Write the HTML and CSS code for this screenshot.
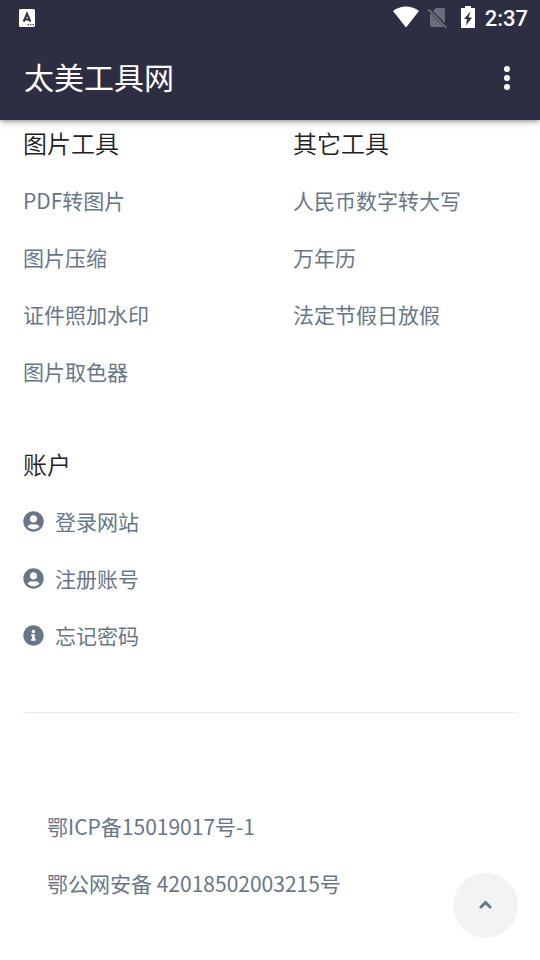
FILE: index.html
```html
<!DOCTYPE html>
<html lang="zh-CN">
<head>
<meta charset="utf-8">
<meta name="viewport" content="width=device-width, initial-scale=1">
<title>太美工具网</title>
<link rel="stylesheet" href="styles.css">
</head>
<body>
<header class="top">
  <div class="status">
    <svg class="ime" width="16" height="18" viewBox="0 0 16 18" aria-hidden="true">
      <rect width="16" height="18" rx="1.5" fill="#fff"/>
      <path d="M4.6 12.6 8 4.800l3.400 7.800M5.800 10.400h4.400" fill="none" stroke="#2d2e43" stroke-width="2"/>
      <path d="M8.500 15.700h1.300M11 15.700h1.300M13.500 15.700h1.300" stroke="#2d2e43" stroke-width="1.300"/>
    </svg>
    <div class="signals">
      <svg width="26" height="22" viewBox="0 0 26 22" aria-hidden="true">
        <path d="M0 5C7.500-1 18.500-1 26 5L13 21.500z" fill="#fff"/>
      </svg>
      <svg width="20" height="22" viewBox="0 0 20 22" aria-hidden="true">
        <path d="M8 2H15.500Q17 2 17 3.500V17L5 5zM2 7 16 21H4Q2 21 2 19z" fill="#6c6d7b"/>
        <path d="M.5 3.500 18.500 21.800" stroke="#6c6d7b" stroke-width="1.800"/>
      </svg>
      <svg class="battery" width="14" height="22" viewBox="0 0 14 22" aria-hidden="true">
        <path d="M4 0h6v2h4v20H0V2h4z" fill="#fff"/>
        <path d="M9.500 5.500 3 13H6L5 19.500 11 11.500H7.500z" fill="#2d2e43"/>
      </svg>
      <span class="clock">2:37</span>
    </div>
  </div>
  <div class="appbar">
    <h1 class="title">太美工具网</h1>
    <button class="more" type="button" aria-label="更多">
      <svg width="6" height="24" viewBox="0 0 6 24" aria-hidden="true">
        <circle cx="3" cy="3" r="3"/><circle cx="3" cy="12" r="3"/><circle cx="3" cy="21" r="3"/>
      </svg>
    </button>
  </div>
</header>
<main class="content">
  <div class="groups">
    <section class="group">
      <h2 class="heading">图片工具</h2>
      <ul class="links">
        <li><a href="#">PDF转图片</a></li>
        <li><a href="#">图片压缩</a></li>
        <li><a href="#">证件照加水印</a></li>
        <li><a href="#">图片取色器</a></li>
      </ul>
    </section>
    <section class="group">
      <h2 class="heading">其它工具</h2>
      <ul class="links">
        <li><a href="#">人民币数字转大写</a></li>
        <li><a href="#">万年历</a></li>
        <li><a href="#">法定节假日放假</a></li>
      </ul>
    </section>
    <section class="group">
      <h2 class="heading">账户</h2>
      <ul class="links">
        <li><a href="#"><svg class="icon" viewBox="0 0 496 512" aria-hidden="true"><path d="M248 8C111 8 0 119 0 256s111 248 248 248 248-111 248-248S385 8 248 8zm0 96c48.600 0 88 39.400 88 88s-39.400 88-88 88-88-39.400-88-88 39.400-88 88-88zm0 344c-58.700 0-111.300-26.600-146.500-68.200 18.800-35.400 55.600-59.800 98.500-59.800 2.400 0 4.800.4 7.100 1.100 13 4.200 26.600 6.900 40.900 6.900 14.300 0 28-2.700 40.900-6.900 2.300-.7 4.700-1.100 7.100-1.100 42.900 0 79.700 24.400 98.500 59.800C359.300 421.400 306.700 448 248 448z"/></svg>登录网站</a></li>
        <li><a href="#"><svg class="icon" viewBox="0 0 496 512" aria-hidden="true"><path d="M248 8C111 8 0 119 0 256s111 248 248 248 248-111 248-248S385 8 248 8zm0 96c48.600 0 88 39.400 88 88s-39.400 88-88 88-88-39.400-88-88 39.400-88 88-88zm0 344c-58.700 0-111.300-26.600-146.500-68.200 18.800-35.400 55.600-59.800 98.500-59.800 2.400 0 4.800.4 7.100 1.100 13 4.200 26.600 6.900 40.900 6.900 14.300 0 28-2.700 40.900-6.900 2.300-.7 4.700-1.100 7.100-1.100 42.900 0 79.700 24.400 98.500 59.800C359.300 421.400 306.700 448 248 448z"/></svg>注册账号</a></li>
        <li><a href="#"><svg class="icon" viewBox="0 0 512 512" aria-hidden="true"><path d="M256 8C119 8 8 119 8 256s111 248 248 248 248-111 248-248S393 8 256 8zm0 110c23.200 0 42 18.800 42 42s-18.800 42-42 42-42-18.800-42-42 18.800-42 42-42zm56 254c0 6.600-5.400 12-12 12h-88c-6.600 0-12-5.400-12-12v-24c0-6.600 5.400-12 12-12h12v-64h-12c-6.600 0-12-5.400-12-12v-24c0-6.600 5.400-12 12-12h64c6.600 0 12 5.400 12 12v100h12c6.600 0 12 5.400 12 12v24z"/></svg>忘记密码</a></li>
      </ul>
    </section>
  </div>
  <footer class="footer">
    <ul class="links">
      <li><a href="#">鄂ICP备15019017号-1</a></li>
      <li><a href="#">鄂公网安备 42018502003215号</a></li>
    </ul>
  </footer>
</main>
<button class="to-top" type="button" aria-label="返回顶部">
  <svg width="13" height="11" viewBox="0 0 13 11" aria-hidden="true"><path d="M2 7 6.500 2.500 11 7" fill="none" stroke="#677788" stroke-width="3" stroke-linecap="round"/></svg>
</button>
</body>
</html>
```
FILE: styles.css
```css
* {
  box-sizing: border-box;
}

body {
  margin: 0;
  background: #fff;
  color: #1e2022;
  font-family: "Noto Sans CJK SC", sans-serif;
  font-weight: 400;
}

h1, h2, ul {
  margin: 0;
  padding: 0;
  font-weight: inherit;
}

ul {
  list-style: none;
}

button {
  border: 0;
  padding: 0;
  display: flex;
  align-items: center;
  justify-content: center;
}

.top {
  background: #2d2e43;
  color: #fff;
  box-shadow: 0 1px 6px rgba(0, 0, 0, 0.5);
}

.status {
  display: flex;
  align-items: center;
  justify-content: space-between;
  height: 36px;
  padding: 0 12px 0 19px;
}

.signals {
  display: flex;
  align-items: center;
  gap: 9px;
  height: 36px;
  padding-bottom: 2px;
}

.battery {
  margin: 0 1px 0 4px;
}

.clock {
  font: 500 22px/36px Roboto, sans-serif;
  padding-top: 3px;
}

.appbar {
  display: flex;
  align-items: center;
  justify-content: space-between;
  height: 84px;
  padding: 0 21px 0 24px;
}

.title {
  padding-bottom: 4px;
  font-size: 30px;
  line-height: 80px;
}

.more {
  width: 24px;
  height: 48px;
  background: none;
  fill: #fff;
}

.content {
  padding: 0 22px 0 23px;
}

.groups {
  display: grid;
  grid-template-columns: 1fr 1fr;
  column-gap: 45px;
  row-gap: 41px;
  padding-bottom: 48px;
  border-bottom: 1px solid #e7eaf3;
}

.heading {
  margin-bottom: 6px;
  font-size: 24px;
  font-weight: 350;
  line-height: 46px;
}

.links {
  font-size: 21px;
  line-height: 57px;
}

.links a {
  display: flex;
  align-items: center;
  color: #677788;
  text-decoration: none;
  white-space: pre;
}

.icon {
  width: 21px;
  height: 21px;
  margin-right: 11px;
  fill: #677788;
}

.footer {
  padding: 85px 24px 48px;
}

.to-top {
  position: fixed;
  right: 22px;
  bottom: 22px;
  width: 65px;
  height: 65px;
  border-radius: 50%;
  background: #f1f3f5;
}
```
